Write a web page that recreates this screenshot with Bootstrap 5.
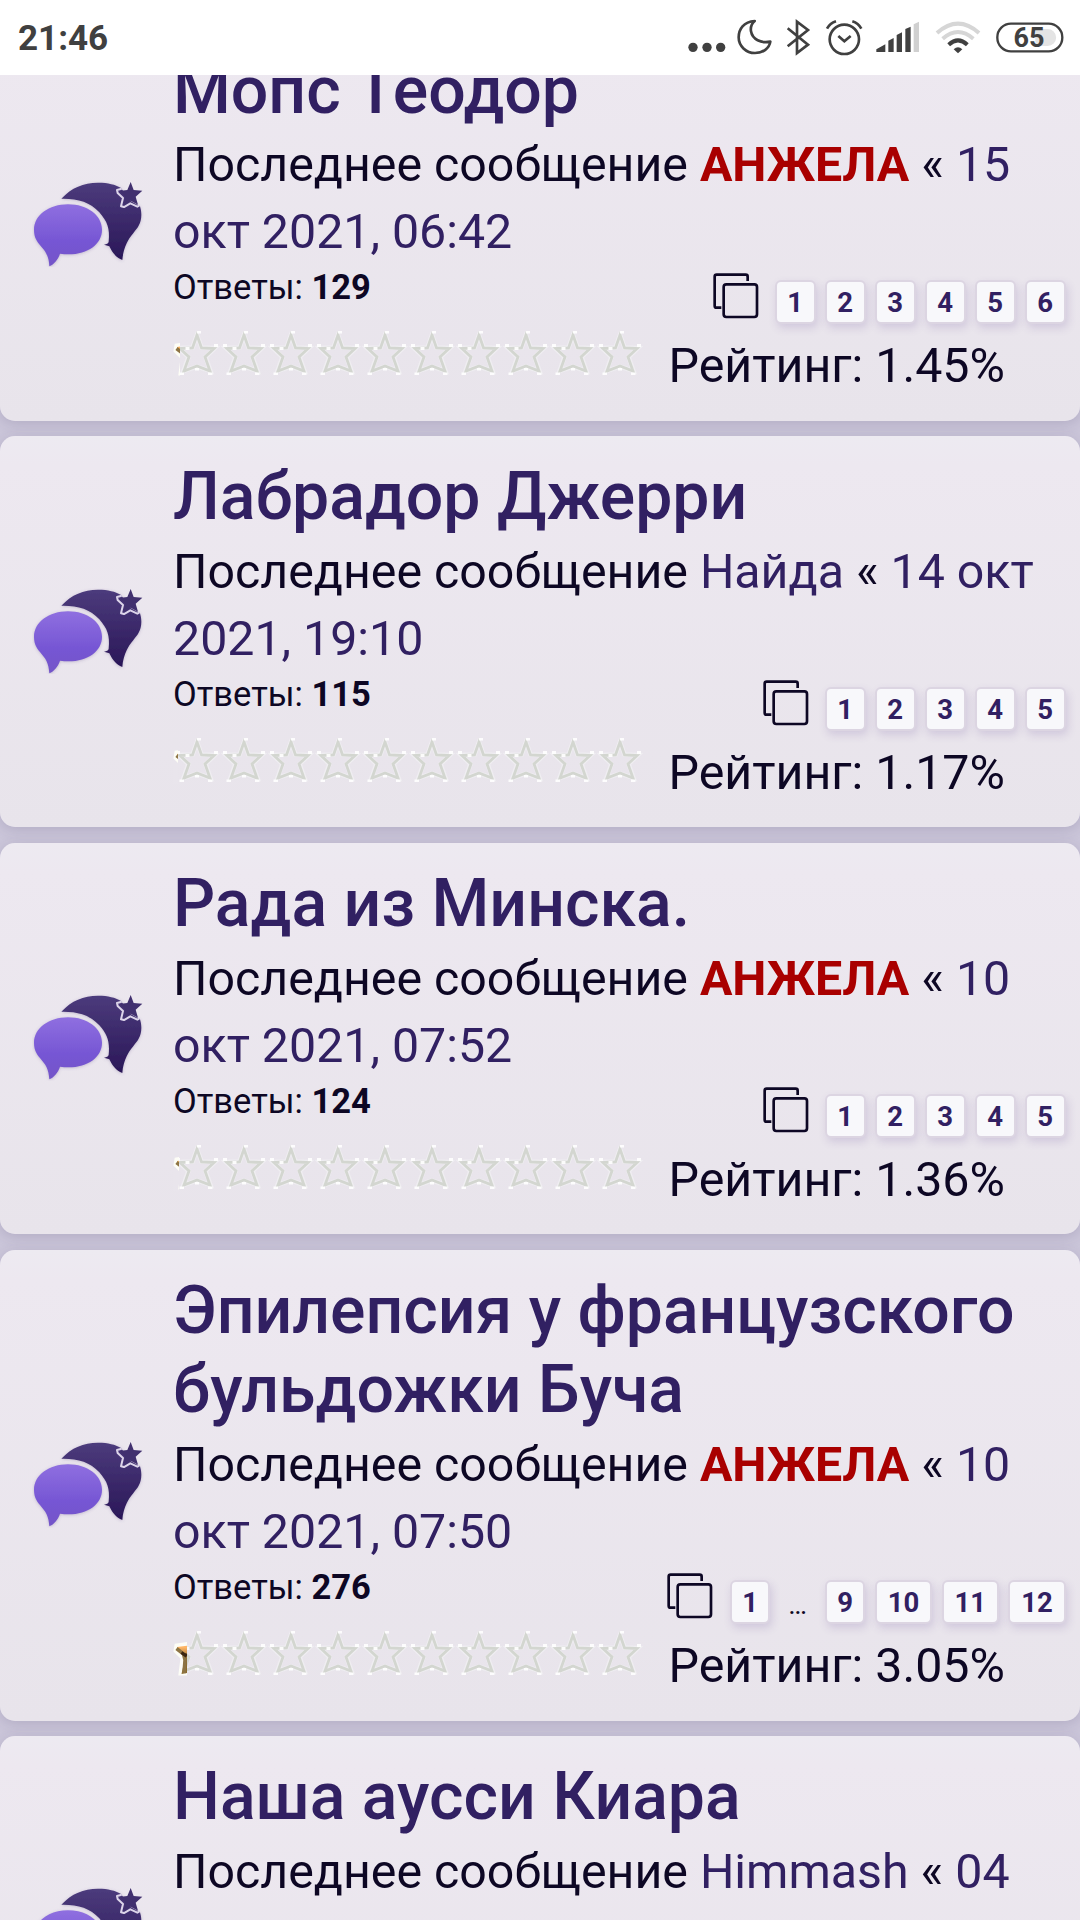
<!DOCTYPE html>
<html lang="ru">
<head>
<meta charset="utf-8">
<meta name="viewport" content="width=device-width, initial-scale=1">
<title>Форум</title>
<link rel="stylesheet" href="https://cdn.jsdelivr.net/npm/bootstrap@5.3.0/dist/css/bootstrap.min.css">
<style>
  body { font-family: Roboto, "Noto Sans", sans-serif; background: #cbc6da; color: #0d0724; height: 1920px; overflow: hidden; }
  .statusbar { height: 75px; background: #fff; color: #404040; padding-left: 18px; position: relative; z-index: 2; }
  .clock { font-size: 35px; font-weight: 700; line-height: 77px; }
  .statusbar svg { height: 75px; display: block; flex: none; }
  .feed { height: 1845px; overflow: hidden; }
  .feed-list { gap: 15.8px; margin-top: -45.4px; }
  .topic { border-radius: 15px; background: linear-gradient(#edeaf1 0, #ede8f0 30px, #e8e4eb 100%); box-shadow: 0 3px 14px rgba(60,45,90,.17); padding-top: 21px; min-height: 391px; flex: none; }
  .topic-tall { min-height: 470.5px; }
  .topic-icon { width: 173px; padding-left: 32px; margin-top: -23px; flex: none; }
  .topic-icon svg { width: 112px; height: 86.7px; display: block; }
  .topic-title { font-size: 66.15px; font-weight: 500; line-height: 79.3px; color: #312062; margin: 0; white-space: nowrap; }
  .last-post { font-size: 48.3px; line-height: 67px; margin: 1px 0 -1px; white-space: nowrap; }
  .lnk { color: #312062; }
  .adm { color: #a90000; font-weight: 700; }
  .replies { font-size: 34.5px; line-height: 42px; padding-top: 2.5px; }
  .meta-row { height: 67.5px; }
  .pages { gap: 9.5px; padding: 16px 14.5px 0 0; }
  .pages svg { width: 46px; height: 46px; margin: -7px 7px 0 0; }
  .pg { width: 40.5px; height: 44.5px; border: 2.7px solid #dcd5e2; border-radius: 6px; background: #f8f8fb; color: #312062; font-size: 27.5px; font-weight: 700; line-height: 41.5px; text-align: center; box-shadow: 2px 4px 9px rgba(90,60,140,.17); }
  .pg-wide { width: 57.2px; }
  .pg-dots { width: 35.5px; text-align: center; font-size: 28px; line-height: 49px; }
  .stars { width: 470px; height: 46px; position: relative; flex: none; }
  .stars svg { display: block; }
  .stars-on { position: absolute; left: 0; top: 0; height: 46px; overflow: hidden; background: #e9e5ec; }
  .score { font-size: 48.35px; line-height: 56px; margin: 6.5px 0 0 25.5px; white-space: nowrap; }
</style>
<script src="https://cdn.jsdelivr.net/npm/bootstrap@5.3.0/dist/js/bootstrap.bundle.min.js"></script>
</head>
<body>
<svg width="0" height="0" class="position-absolute" aria-hidden="true">
  <defs>
    <linearGradient id="gDark" x1="0" y1="0" x2="0" y2="1"><stop offset="0" stop-color="#4c3b7c"/><stop offset="1" stop-color="#2a1758"/></linearGradient>
    <linearGradient id="gLight" x1="0" y1="0" x2="0" y2="1"><stop offset="0" stop-color="#8f6fe0"/><stop offset=".6" stop-color="#7656d4"/><stop offset="1" stop-color="#7354c8"/></linearGradient>
    <filter id="soft" x="-20%" y="-20%" width="140%" height="140%"><feDropShadow dx="0" dy="2" stdDeviation="4" flood-color="#5a4a80" flood-opacity=".3"/></filter>
    <symbol id="bubbles" viewBox="96 90 336 260">
      <g filter="url(#soft)">
        <path fill="url(#gDark)" d="M184 143C215 110 250 95 294 95C325 95 346 101 362 110L392 150L420 166C423 176 424 184 424 192C424 245 376 243 367 327C348 320 337 305 328 286L312 281C320 279 325 278 326 272C330 232 322 212 298 184C270 152 232 142 184 143Z"/>
        <path fill="url(#gLight)" d="M204 160C262 160 306 193 306 236C306 285 252 318 180 308C174 326 162 340 148 346C146 283 102 288 102 236C102 193 147 160 204 160Z"/>
      </g>
      <path fill="none" stroke="#ddd5ea" stroke-width="6" stroke-linejoin="round" d="M365 113L351 117L353 126L369 141L363 166L372 168L391 157L412 167L418 164"/>
      <path fill="#41306f" d="M392 93L401 117L427 119L407 137L414 161L392 149L370 162L376 138L357 120L382 117Z"/>
    </symbol>
    <symbol id="copies" viewBox="0 0 138 138">
      <path d="M25 104H10Q5 104 5 98V11Q5 5 11 5H98Q104 5 104 11V24" fill="none" stroke="#0d0724" stroke-width="8"/>
      <rect x="32" y="34" width="100" height="98" rx="8" fill="none" stroke="#0d0724" stroke-width="8"/>
    </symbol>
    <pattern id="starOff" width="47" height="46" patternUnits="userSpaceOnUse">
      <path d="M24 4L28.500 16.500L42 17L32.500 26L37.500 40L24 35.500L10.500 40L15.500 26L6 17L19.500 16.500Z" fill="none" stroke="#f4f3f5" stroke-width="4.500" opacity=".6"/>
      <path d="M24 4L28.500 17L41 17.500L32 26L37 40L24 35L11 40L16 26L7 17.500L19.500 17Z" fill="none" stroke="#d3d6d0" stroke-width="2.800"/>
      <g fill="#fff" opacity=".9"><rect x="24" y="0" width="4" height="2.500"/><rect x="41" y="13" width="4" height="3"/><rect x="3" y="13" width="4" height="3"/><rect x="35" y="41.500" width="4.500" height="2.500"/><rect x="6.500" y="41.500" width="4.500" height="2.500"/><rect x="12.500" y="16" width="4" height="3"/><rect x="22" y="37" width="4" height="2.500"/></g>
    </pattern>
    <linearGradient id="gGold" x1="0" y1="0" x2="0" y2="1"><stop offset=".3" stop-color="#ffb565"/><stop offset=".6" stop-color="#8a6a2c"/></linearGradient>
    <symbol id="starOn" viewBox="0 0 47 46">
      <path d="M24 4L19 12L3 14L2 20L9 27L7 43H24Z" fill="#fdfdf6" stroke="#fdfdf6" stroke-width="3"/>
      <path d="M4 16L19 14L24 5V40L8.500 43L12 27Z" fill="url(#gGold)"/>
      <path d="M3.500 17.500L10.500 23L12 29L11 42" fill="none" stroke="#8d7443" stroke-width="3.500"/>
      <path d="M8.500 21.500L12.500 24.500L14 23" fill="none" stroke="#3a2510" stroke-width="3"/>
    </symbol>
    <symbol id="starRow" viewBox="0 0 470 46"><rect width="470" height="46" fill="url(#starOff)"/></symbol>
  </defs>
</svg>

<header class="statusbar d-flex justify-content-between">
  <div class="clock">21:46</div>
  <div class="d-flex" aria-hidden="true">
    <svg width="47" viewBox="74 0 141 225" fill="#404040"><circle cx="98" cy="142" r="14"/><circle cx="140" cy="142" r="14"/><circle cx="181" cy="142" r="14"/></svg>
    <svg width="47" viewBox="215 0 141 225" fill="none" stroke="#404040" stroke-width="8" stroke-linejoin="round"><path d="M283 63C250 65 235 88 235 112C235 138 257 159 284 159C308 159 327 145 330 125C302 131 276 118 272 94C270 82 274 71 283 63Z"/></svg>
    <svg width="40" viewBox="356 0 120 225" fill="none" stroke="#404040" stroke-width="8"><path d="M382 85L443 134L410 159V65L443 90L382 139"/></svg>
    <svg width="53" viewBox="476 0 159 225" fill="none" stroke="#404040" stroke-width="8"><circle cx="552" cy="118" r="44"/><path d="M534 108L552 124L571 108M500 86Q509 70 527 64M603 86Q594 70 576 64"/></svg>
    <svg width="55" viewBox="635 0 165 225" fill="#404040"><path d="M648 156V148L675 133V156ZM684 156V122L700 114V156ZM709 156V105L725 97V156ZM735 156V87L751 80V156Z"/><path fill="#d0d0d0" d="M760 156V73L776 65V156Z"/></svg>
    <svg width="60" viewBox="800 0 180 225" fill="none" stroke-width="12"><path stroke="#d6d6d6" d="M830 99Q893 43 956 99M847 116Q893 76 939 116"/><path stroke="#404040" d="M865 134Q893 108 921 134"/><path fill="#404040" d="M880 148Q893 135 906 148L893 160Z"/></svg>
    <svg width="93.300" viewBox="980 0 280 225"><path fill="#e4e4e4" d="M1125 87H1162A25 25 0 0 1 1162 138H1125Z"/><rect x="1011" y="71" width="195" height="83" rx="41" fill="none" stroke="#404040" stroke-width="7"/><text x="1106" y="140" text-anchor="middle" font-family="Roboto, sans-serif" font-weight="700" font-size="81" fill="#404040">65</text></svg>
  </div>
</header>

<main class="feed">
  <div class="feed-list d-flex flex-column">

    <article class="topic d-flex align-items-center">
      <div class="topic-icon"><svg><use href="#bubbles"/></svg></div>
      <div class="flex-grow-1 align-self-start">
        <h2 class="topic-title">Мопс Теодор</h2>
        <p class="last-post">Последнее сообщение <span class="adm">АНЖЕЛА</span> « <span class="lnk">15<br>окт 2021, 06:42</span></p>
        <div class="meta-row d-flex justify-content-between align-items-start">
          <div class="replies">Ответы: <b>129</b></div>
          <div class="pages d-flex"><svg><use href="#copies"/></svg><span class="pg">1</span><span class="pg">2</span><span class="pg">3</span><span class="pg">4</span><span class="pg">5</span><span class="pg">6</span></div>
        </div>
        <div class="d-flex align-items-start">
          <div class="stars"><svg width="470" height="46"><use href="#starRow"/></svg><div class="stars-on" style="width:1.45%"><svg width="47" height="46"><use href="#starOn"/></svg></div></div>
          <div class="score">Рейтинг: 1.45%</div>
        </div>
      </div>
    </article>

    <article class="topic d-flex align-items-center">
      <div class="topic-icon"><svg><use href="#bubbles"/></svg></div>
      <div class="flex-grow-1 align-self-start">
        <h2 class="topic-title">Лабрадор Джерри</h2>
        <p class="last-post">Последнее сообщение <span class="lnk">Найда</span> « <span class="lnk">14 окт<br>2021, 19:10</span></p>
        <div class="meta-row d-flex justify-content-between align-items-start">
          <div class="replies">Ответы: <b>115</b></div>
          <div class="pages d-flex"><svg><use href="#copies"/></svg><span class="pg">1</span><span class="pg">2</span><span class="pg">3</span><span class="pg">4</span><span class="pg">5</span></div>
        </div>
        <div class="d-flex align-items-start">
          <div class="stars"><svg width="470" height="46"><use href="#starRow"/></svg><div class="stars-on" style="width:1.17%"><svg width="47" height="46"><use href="#starOn"/></svg></div></div>
          <div class="score">Рейтинг: 1.17%</div>
        </div>
      </div>
    </article>

    <article class="topic d-flex align-items-center">
      <div class="topic-icon"><svg><use href="#bubbles"/></svg></div>
      <div class="flex-grow-1 align-self-start">
        <h2 class="topic-title">Рада из Минска.</h2>
        <p class="last-post">Последнее сообщение <span class="adm">АНЖЕЛА</span> « <span class="lnk">10<br>окт 2021, 07:52</span></p>
        <div class="meta-row d-flex justify-content-between align-items-start">
          <div class="replies">Ответы: <b>124</b></div>
          <div class="pages d-flex"><svg><use href="#copies"/></svg><span class="pg">1</span><span class="pg">2</span><span class="pg">3</span><span class="pg">4</span><span class="pg">5</span></div>
        </div>
        <div class="d-flex align-items-start">
          <div class="stars"><svg width="470" height="46"><use href="#starRow"/></svg><div class="stars-on" style="width:1.36%"><svg width="47" height="46"><use href="#starOn"/></svg></div></div>
          <div class="score">Рейтинг: 1.36%</div>
        </div>
      </div>
    </article>

    <article class="topic topic-tall d-flex align-items-center">
      <div class="topic-icon"><svg><use href="#bubbles"/></svg></div>
      <div class="flex-grow-1 align-self-start">
        <h2 class="topic-title">Эпилепсия у французского<br>бульдожки Буча</h2>
        <p class="last-post">Последнее сообщение <span class="adm">АНЖЕЛА</span> « <span class="lnk">10<br>окт 2021, 07:50</span></p>
        <div class="meta-row d-flex justify-content-between align-items-start">
          <div class="replies">Ответы: <b>276</b></div>
          <div class="pages d-flex"><svg><use href="#copies"/></svg><span class="pg">1</span><span class="pg-dots">…</span><span class="pg">9</span><span class="pg pg-wide">10</span><span class="pg pg-wide">11</span><span class="pg pg-wide">12</span></div>
        </div>
        <div class="d-flex align-items-start">
          <div class="stars"><svg width="470" height="46"><use href="#starRow"/></svg><div class="stars-on" style="width:3.05%"><svg width="47" height="46"><use href="#starOn"/></svg></div></div>
          <div class="score">Рейтинг: 3.05%</div>
        </div>
      </div>
    </article>

    <article class="topic d-flex align-items-center">
      <div class="topic-icon"><svg><use href="#bubbles"/></svg></div>
      <div class="flex-grow-1 align-self-start">
        <h2 class="topic-title">Наша аусси Киара</h2>
        <p class="last-post">Последнее сообщение <span class="lnk">Himmash</span> « <span class="lnk">04</span></p>
      </div>
    </article>
  </div>
</main>
</body>
</html>
